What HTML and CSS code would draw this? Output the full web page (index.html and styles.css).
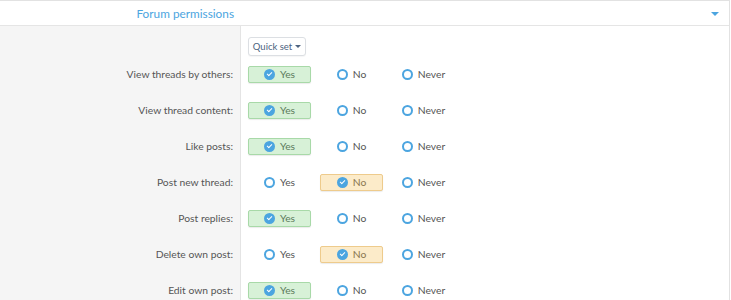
FILE: index.html
```html
<!DOCTYPE html>
<html lang="en">
<head>
  <meta charset="UTF-8" />
  <title>Forum permissions</title>
  <link rel="stylesheet" href="styles.css">
</head>
<body>
  <div class="block">
    <div class="block-header">
      <span class="header-title">Forum permissions</span>
      <span class="header-toggle"></span>
    </div>

    <div class="form-body">
      <div class="row">
        <div class="row-label"></div>
        <div class="row-input quick">
          <button class="quick-set">Quick set <span class="caret"></span></button>
        </div>
      </div>

      <div class="row">
        <div class="row-label">View threads by others:</div>
        <div class="row-input">
          <span class="choice yes"><span class="dot checked"></span>Yes</span>
          <span class="choice"><span class="dot"></span>No</span>
          <span class="choice"><span class="dot"></span>Never</span>
        </div>
      </div>

      <div class="row">
        <div class="row-label">View thread content:</div>
        <div class="row-input">
          <span class="choice yes"><span class="dot checked"></span>Yes</span>
          <span class="choice"><span class="dot"></span>No</span>
          <span class="choice"><span class="dot"></span>Never</span>
        </div>
      </div>

      <div class="row">
        <div class="row-label">Like posts:</div>
        <div class="row-input">
          <span class="choice yes"><span class="dot checked"></span>Yes</span>
          <span class="choice"><span class="dot"></span>No</span>
          <span class="choice"><span class="dot"></span>Never</span>
        </div>
      </div>

      <div class="row">
        <div class="row-label">Post new thread:</div>
        <div class="row-input">
          <span class="choice"><span class="dot"></span>Yes</span>
          <span class="choice no"><span class="dot checked"></span>No</span>
          <span class="choice"><span class="dot"></span>Never</span>
        </div>
      </div>

      <div class="row">
        <div class="row-label">Post replies:</div>
        <div class="row-input">
          <span class="choice yes"><span class="dot checked"></span>Yes</span>
          <span class="choice"><span class="dot"></span>No</span>
          <span class="choice"><span class="dot"></span>Never</span>
        </div>
      </div>

      <div class="row">
        <div class="row-label">Delete own post:</div>
        <div class="row-input">
          <span class="choice"><span class="dot"></span>Yes</span>
          <span class="choice no"><span class="dot checked"></span>No</span>
          <span class="choice"><span class="dot"></span>Never</span>
        </div>
      </div>

      <div class="row">
        <div class="row-label">Edit own post:</div>
        <div class="row-input">
          <span class="choice yes"><span class="dot checked"></span>Yes</span>
          <span class="choice"><span class="dot"></span>No</span>
          <span class="choice"><span class="dot"></span>Never</span>
        </div>
      </div>
    </div>
  </div>
</body>
</html>
```

FILE: styles.css
```css
body {
  margin: 0;
  font-family: Lato, 'Open Sans', sans-serif;
  font-size: 10.3px;
  color: #555;
  background: #fff;
}
.block {
  width: 729px;
  border-top: 1px solid #e2e2e2;
  border-right: 1px solid #e2e2e2;
  padding-top: 1px;
}
.block-header {
  display: grid;
  grid-template-columns: 240px 1fr 24px;
  height: 23px;
  align-items: center;
  border-bottom: 1px solid #e5e5e5;
}
.header-title {
  text-align: right;
  padding-right: 6px;
  font-size: 11.8px;
  color: #4ca5e0;
}
.header-toggle {
  grid-column: 3;
  width: 0;
  height: 0;
  border-left: 4px solid transparent;
  border-right: 4px solid transparent;
  border-top: 4px solid #4ca5e0;
  margin-left: 6px;
}
.form-body {
  background: linear-gradient(to right, #f5f5f5 240px, #e4e4e4 240px, #e4e4e4 241px, #fff 241px);
}
.row {
  display: grid;
  grid-template-columns: 241px 1fr;
  height: 36px;
  align-items: center;
}
.row-label {
  text-align: right;
  padding-right: 8px;
}
.row-input {
  display: flex;
  padding-left: 7px;
  gap: 9px;
}
.row:first-child {
  height: 30px;
  align-items: start;
}
.quick {
  padding-top: 11px;
}
.quick-set {
  font-family: inherit;
  font-size: 9.5px;
  color: #4d6380;
  background: #fff;
  border: 1px solid #dcdfe3;
  border-radius: 3px;
  height: 19px;
  width: 58px;
  padding: 0;
  display: flex;
  align-items: center;
  justify-content: center;
  gap: 3px;
  box-shadow: 0 1px 1px rgba(0, 0, 0, 0.04);
}
.caret {
  width: 0;
  height: 0;
  border-left: 3px solid transparent;
  border-right: 3px solid transparent;
  border-top: 3px solid #4d6380;
}
.choice {
  box-sizing: border-box;
  width: 63px;
  height: 17px;
  display: flex;
  align-items: center;
  justify-content: center;
  gap: 5px;
  border: 1px solid transparent;
  border-radius: 2px;
}
.choice.yes {
  background: #d7f1d7;
  border-color: #a8d9a8;
  color: #5b7a5b;
  box-shadow: 0 1px 1px rgba(0, 0, 0, 0.08);
}
.choice.no {
  background: #fcebc9;
  border-color: #eecb8c;
  color: #8a7650;
  box-shadow: 0 1px 1px rgba(0, 0, 0, 0.08);
}
.dot {
  box-sizing: border-box;
  width: 11px;
  height: 11px;
  border-radius: 50%;
  border: 2px solid #4ca5e0;
  background: #fff;
  position: relative;
}
.dot.checked {
  background: #4ca5e0;
}
.dot.checked::after {
  content: "";
  position: absolute;
  left: 2px;
  top: 0.5px;
  width: 2px;
  height: 4px;
  border-right: 1.5px solid #fff;
  border-bottom: 1.5px solid #fff;
  transform: rotate(45deg);
}
```
